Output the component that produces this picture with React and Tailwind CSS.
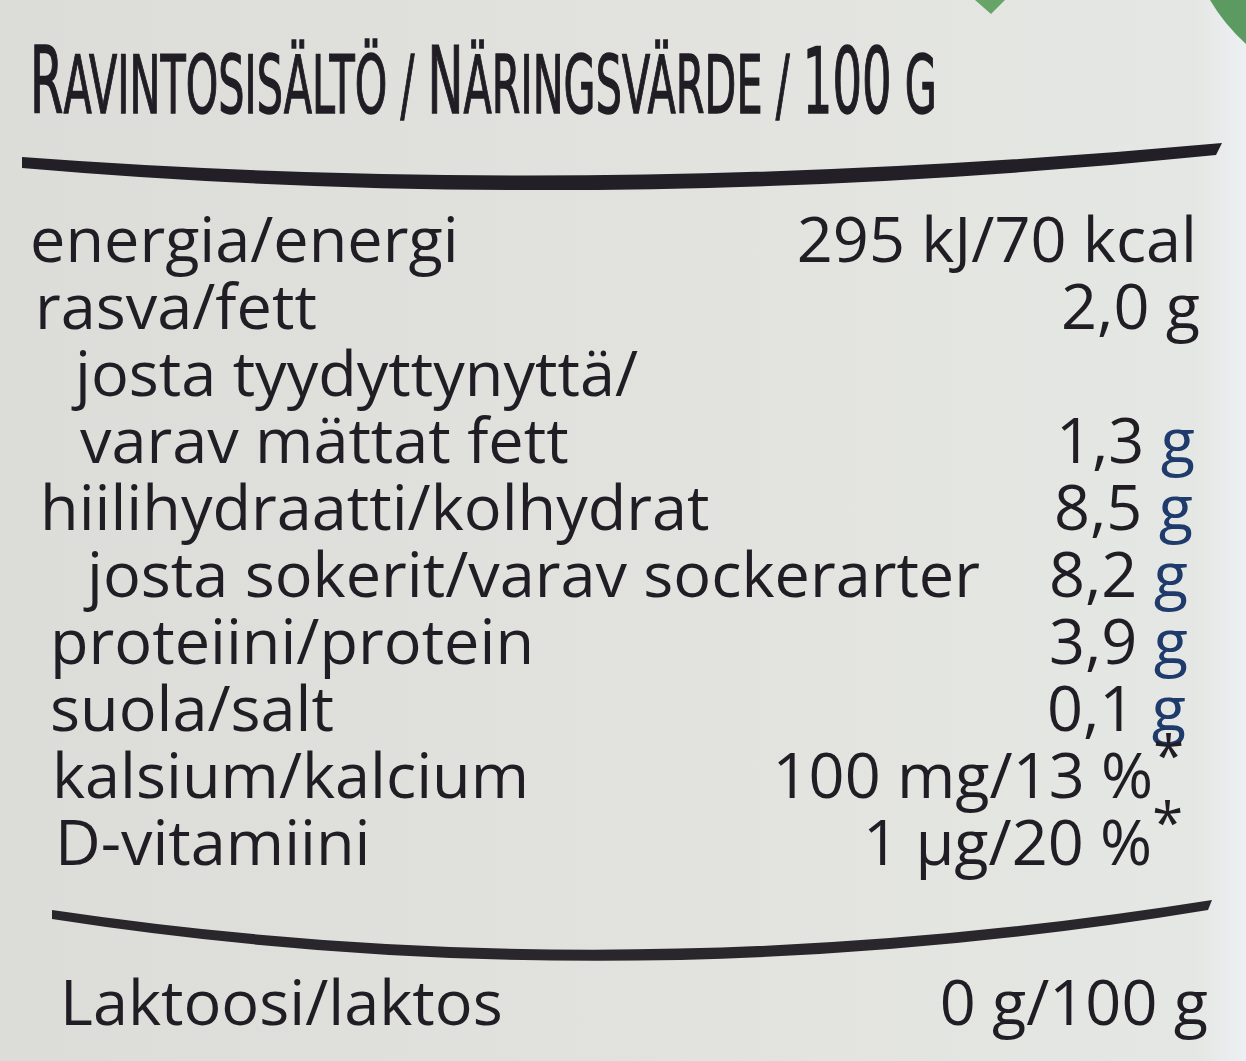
import React from 'react';

const rows = [
  { label: 'energia/energi', value: '295 kJ/70 kcal', pad: 'pl-[30px] pr-[49px]' },
  { label: 'rasva/fett', value: '2,0 g', pad: 'pl-[35px] pr-[46px]' },
  { label: 'josta tyydyttynyttä/', pad: 'pl-[75px] pr-[50px]' },
  { label: 'varav mättat fett', value: '1,3', unit: 'g', pad: 'pl-[80px] pr-[51px]' },
  { label: 'hiilihydraatti/kolhydrat', value: '8,5', unit: 'g', pad: 'pl-[40px] pr-[53px]' },
  { label: 'josta sokerit/varav sockerarter', value: '8,2', unit: 'g', pad: 'pl-[87px] pr-[58px]' },
  { label: 'proteiini/protein', value: '3,9', unit: 'g', pad: 'pl-[50px] pr-[58px]' },
  { label: 'suola/salt', value: '0,1', unit: 'g', pad: 'pl-[50px] pr-[60px]' },
  { label: 'kalsium/kalcium', value: '100 mg/13 %', star: true, pad: 'pl-[52px] pr-[62px]' },
  { label: 'D-vitamiini', value: '1 µg/20 %', star: true, pad: 'pl-[55px] pr-[63px]' },
];

const Row = ({ label, value, unit, star, pad }) => (
  <div className={`flex justify-between items-baseline h-[67px] leading-[67px] whitespace-nowrap ${pad}`}>
    <span>{label}</span>
    {value && (
      <span>
        {value}
        {unit && <span className="text-[#1f3b6b]"> {unit}</span>}
        {star && <span className="relative -top-[22px] text-[56px] leading-none">*</span>}
      </span>
    )}
  </div>
);

export default function App() {
  return (
    <div className="relative h-[1061px] w-full overflow-hidden bg-[linear-gradient(to_right,#dcddd8_0%,#e2e3de_55%,#e5e7e4_96%,#edf0f2_100%)] text-[#211d24] font-['Open_Sans',sans-serif] text-[63px]">
      {/* green corner of the logo */}
      <svg className="absolute top-0 right-0 w-[300px] h-[60px]" viewBox="0 0 300 60">
        <path d="M264 0 Q278 24 300 44 L300 0 Z" fill="#5b9b61" />
        <path d="M29 0 L59 0 L45 14 Z" fill="#67a467" />
      </svg>

      {/* heading */}
      <div className="h-[126px] pt-[41px] pl-[30px]">
        <div className="inline-block origin-left scale-x-[0.517] whitespace-nowrap font-['DejaVu_Sans',sans-serif] text-[80px] leading-[80px] [-webkit-text-stroke:1.5px_#211d24]">
          <span className="text-[93px]">R</span>AVINTOSISÄLTÖ / <span className="text-[93px]">N</span>ÄRINGSVÄRDE / <span className="text-[90px]">100</span> G
        </div>
      </div>

      <svg className="block w-full h-[78px]" viewBox="0 0 1246 78" preserveAspectRatio="none">
        <path d="M22 31 Q600 74 1222 17 L1216 29 Q600 92 22 42 Z" fill="#231f26" />
      </svg>

      <div>
        {rows.map((row) => (
          <Row key={row.label} {...row} />
        ))}
      </div>

      <svg className="block w-full h-[93px] overflow-visible" viewBox="0 0 1246 93" preserveAspectRatio="none">
        <path d="M52 36 Q620 120 1212 26 L1208 36 Q620 133 52 45 Z" fill="#2a272c" />
      </svg>

      <div className="flex justify-between items-baseline h-[67px] leading-[67px] whitespace-nowrap pl-[60px] pr-[38px]">
        <span>Laktoosi/laktos</span>
        <span>0 g/100 g</span>
      </div>
    </div>
  );
}
